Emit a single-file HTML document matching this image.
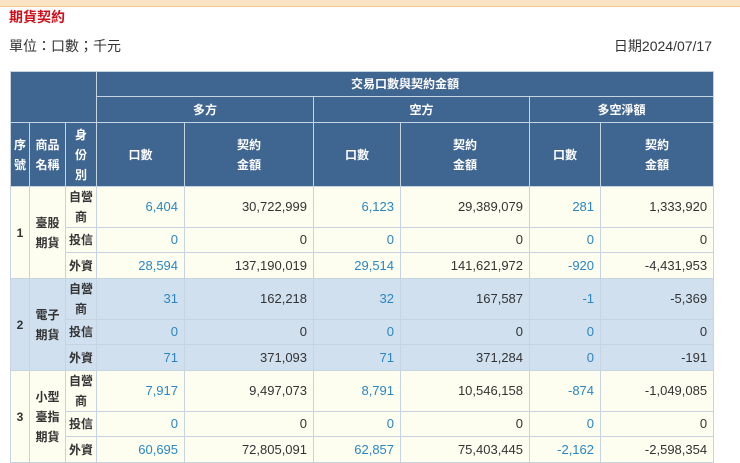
<!DOCTYPE html>
<html><head><meta charset="utf-8"><style>
body{margin:0;width:740px;height:460px;overflow:hidden;background:#fff;font-family:"Liberation Sans","Noto Sans CJK TC",sans-serif;color:#333}
.top{position:absolute;left:0;top:0;width:740px;height:6px;background:#fbe4c4;border-bottom:1px solid #f0c890}
.title{position:absolute;left:9px;top:7px;font-size:14px;font-weight:bold;color:#d0101a}
.unit{position:absolute;left:9px;top:36px;font-size:14px;color:#333}
.date{position:absolute;right:28px;top:36px;font-size:14px;color:#333}
table{position:absolute;left:10px;top:71px;border-collapse:collapse;table-layout:fixed;width:703px;font-size:13px}
td,th{border:1px solid #c6d3e0;padding:0 6px;line-height:20px}
th{background:#3f6591;color:#fff;font-weight:bold;font-size:12px;text-align:center;padding:0}
td{background:#fdfdf0;text-align:right}
tr.b td{background:#d0e0ef}
td.c{text-align:center;font-weight:bold;font-size:12px;padding:0}
td.n{color:#2a86c2}
</style></head><body>
<div class="top"></div>
<div class="title">期貨契約</div>
<div class="unit">單位：口數；千元</div>
<div class="date">日期2024/07/17</div>
<table>
<colgroup><col style="width:19px"><col style="width:36px"><col style="width:31px"><col style="width:88px"><col style="width:129px"><col style="width:87px"><col style="width:129px"><col style="width:71px"><col style="width:113px"></colgroup>
<tr style="height:25px"><th colspan="3" rowspan="2"></th><th colspan="6">交易口數與契約金額</th></tr>
<tr style="height:26px"><th colspan="2">多方</th><th colspan="2">空方</th><th colspan="2">多空淨額</th></tr>
<tr style="height:64px"><th>序<br>號</th><th>商品<br>名稱</th><th>身<br>份<br>別</th><th>口數</th><th>契約<br>金額</th><th>口數</th><th>契約<br>金額</th><th>口數</th><th>契約<br>金額</th></tr>
<tr style="height:41px"><td class="c" rowspan="3">1</td><td class="c" rowspan="3">臺股<br>期貨</td><td class="c">自營<br>商</td><td class="n">6,404</td><td>30,722,999</td><td class="n">6,123</td><td>29,389,079</td><td class="n">281</td><td>1,333,920</td></tr>
<tr style="height:25px"><td class="c">投信</td><td class="n">0</td><td>0</td><td class="n">0</td><td>0</td><td class="n">0</td><td>0</td></tr>
<tr style="height:26px"><td class="c">外資</td><td class="n">28,594</td><td>137,190,019</td><td class="n">29,514</td><td>141,621,972</td><td class="n">-920</td><td>-4,431,953</td></tr>
<tr class="b" style="height:41px"><td class="c" rowspan="3">2</td><td class="c" rowspan="3">電子<br>期貨</td><td class="c">自營<br>商</td><td class="n">31</td><td>162,218</td><td class="n">32</td><td>167,587</td><td class="n">-1</td><td>-5,369</td></tr>
<tr class="b" style="height:25px"><td class="c">投信</td><td class="n">0</td><td>0</td><td class="n">0</td><td>0</td><td class="n">0</td><td>0</td></tr>
<tr class="b" style="height:26px"><td class="c">外資</td><td class="n">71</td><td>371,093</td><td class="n">71</td><td>371,284</td><td class="n">0</td><td>-191</td></tr>
<tr style="height:41px"><td class="c" rowspan="3">3</td><td class="c" rowspan="3">小型<br>臺指<br>期貨</td><td class="c">自營<br>商</td><td class="n">7,917</td><td>9,497,073</td><td class="n">8,791</td><td>10,546,158</td><td class="n">-874</td><td>-1,049,085</td></tr>
<tr style="height:25px"><td class="c">投信</td><td class="n">0</td><td>0</td><td class="n">0</td><td>0</td><td class="n">0</td><td>0</td></tr>
<tr style="height:26px"><td class="c">外資</td><td class="n">60,695</td><td>72,805,091</td><td class="n">62,857</td><td>75,403,445</td><td class="n">-2,162</td><td>-2,598,354</td></tr>
</table>
</body></html>
